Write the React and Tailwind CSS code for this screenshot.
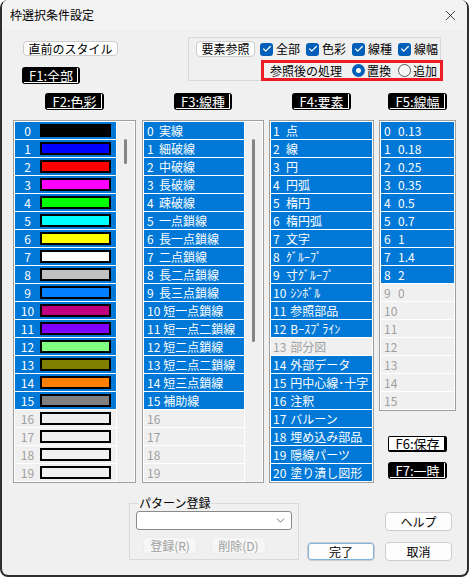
import React from "react";
import { X, Check, ChevronDown } from "lucide-react";

const swatches = [
  "bg-[#000000]", "bg-[#0000ff]", "bg-[#ff0000]", "bg-[#ff00ff]", "bg-[#00ff00]",
  "bg-[#00ffff]", "bg-[#ffff00]", "bg-[#ffffff]", "bg-[#c0c0c0]", "bg-[#0080ff]",
  "bg-[#c00080]", "bg-[#8000ff]", "bg-[#80ff80]", "bg-[#808000]", "bg-[#ff8000]",
  "bg-[#808080]",
];

const lineTypes = [
  "実線", "細破線", "中破線", "長破線", "疎破線", "一点鎖線", "長一点鎖線", "二点鎖線",
  "長二点鎖線", "長三点鎖線", "短一点鎖線", "短一点二鎖線", "短二点鎖線", "短二点二鎖線",
  "短三点鎖線", "補助線",
];

const elements = [
  "点", "線", "円", "円弧", "楕円", "楕円弧", "文字", "ｸﾞﾙｰﾌﾟ", "寸ｸﾞﾙｰﾌﾟ", "ｼﾝﾎﾞﾙ",
  "参照部品", "Bｰｽﾌﾟﾗｲﾝ", "部分図", "外部データ", "円中心線･十字", "注釈", "バルーン",
  "埋め込み部品", "隠線パーツ", "塗り潰し図形",
];

const widths = ["0.13", "0.18", "0.25", "0.35", "0.5", "0.7", "1", "1.4", "2", "0"];

function BlackTag({ children }) {
  return (
    <div className="bg-black rounded-[3px] h-[17px] pl-[2px] pt-[1px] pr-[2px] pb-[1px] flex">
      <div className="border-r border-b border-white text-white text-[13px] leading-none flex items-center pl-[5px] pr-[4px]">
        {children}
      </div>
    </div>
  );
}

function Btn({ children, className = "" }) {
  return (
    <div className={`bg-[#fdfdfd] border border-[#cccccc] rounded-[4px] text-[12px] leading-none flex items-center justify-center ${className}`}>
      {children}
    </div>
  );
}

function Row({ on, children }) {
  return (
    <div className={`h-[18px] border-b border-white flex items-center text-[12px] leading-none whitespace-nowrap ${on ? "bg-[#0078d7] text-white" : "bg-[#f0f0f0] text-[#a0a0a0]"}`}>
      {children}
    </div>
  );
}

function Scroll({ top, height }) {
  return (
    <div className="w-[17px] ml-[1px] bg-[#f0f0f0] flex flex-col items-center">
      <div className={`w-[3px] rounded-full bg-[#858585] ${top} ${height}`} />
    </div>
  );
}

function CheckItem({ label, last }) {
  return (
    <div className={`flex items-center ${last ? "" : "w-[46px]"}`}>
      <span className="w-[13px] h-[13px] rounded-[3px] bg-[#005fb8] flex items-center justify-center">
        <Check size={10} strokeWidth={3} color="white" />
      </span>
      <span className="ml-[3px] text-[12px] leading-none">{label}</span>
    </div>
  );
}

export default function App() {
  return (
    <div className="w-[469px] h-[577px] bg-white font-['Noto_Sans_CJK_JP','Noto_Sans',sans-serif] text-black">
      <div className="w-full h-full flex flex-col bg-[#f0f0f0] border-x-2 border-b-2 border-[#2e2e2e] rounded-[8px] overflow-hidden">
        {/* title bar */}
        <div className="h-[30px] shrink-0 flex items-center justify-between pl-[8px] pr-[8px] bg-[#f3f3f3]">
          <span className="text-[12px]">枠選択条件設定</span>
          <X size={17} strokeWidth={1} />
        </div>

        {/* top controls */}
        <div className="h-[63px] shrink-0 flex">
          <div className="w-[165px] ml-[21px] pt-[11px] flex flex-col items-start">
            <Btn className="w-[95px] h-[15px]">直前のスタイル</Btn>
            <div className="mt-[11px] -ml-[1px]">
              <BlackTag>F1:全部</BlackTag>
            </div>
          </div>
          <div className="mt-[7px] w-[253px] h-[44px] border border-[#d9d9d9] flex flex-col items-end">
            <div className="self-stretch flex items-center pl-[7px] pt-[3px]">
              <Btn className="w-[59px] h-[16px]">要素参照</Btn>
              <div className="ml-[5px] flex items-center">
                <CheckItem label="全部" />
                <CheckItem label="色彩" />
                <CheckItem label="線種" />
                <CheckItem label="線幅" last />
              </div>
            </div>
            <div className="mt-[3px] -mr-[3px] w-[182px] h-[21px] shrink-0 border-[3px] border-[#ed1c24] flex items-center pl-[6px] text-[12px] leading-none">
              <span>参照後の処理</span>
              <span className="ml-[10px] w-[13px] h-[13px] rounded-full bg-[#005fb8] flex items-center justify-center">
                <span className="w-[5px] h-[5px] rounded-full bg-white" />
              </span>
              <span className="ml-[2px]">置換</span>
              <span className="ml-[7px] w-[13px] h-[13px] rounded-full border border-[#5a5a5a] bg-[#f7f7f7]" />
              <span className="ml-[2px]">追加</span>
            </div>
          </div>
        </div>

        {/* lists */}
        <div className="h-[390px] shrink-0 flex pl-[11px]">
          {/* colours */}
          <div className="w-[123px] flex flex-col items-center">
            <BlackTag>F2:色彩</BlackTag>
            <div className="mt-[10px] w-full border border-[#a0a0a0] bg-white pt-px px-px flex">
              <div className="w-[101px] flex flex-col">
                {Array.from({ length: 20 }, (_, i) => (
                  <Row key={i} on={i < 16}>
                    <span className="w-[25px] text-center">{i}</span>
                    <span className={`w-[71px] h-[13px] border-2 border-black ${i < 16 ? swatches[i] : "bg-[#f0f0f0]"}`} />
                  </Row>
                ))}
              </div>
              <Scroll top="mt-[17px]" height="h-[25px]" />
            </div>
          </div>

          {/* line types */}
          <div className="w-[122px] ml-[6px] flex flex-col items-center">
            <BlackTag>F3:線種</BlackTag>
            <div className="mt-[10px] w-full border border-[#a0a0a0] bg-white pt-px px-px flex">
              <div className="w-[100px] flex flex-col overflow-hidden">
                {Array.from({ length: 20 }, (_, i) => (
                  <Row key={i} on={i < 16}>
                    <span className="ml-[3px] min-w-[9px]">{i}</span>
                    <span className="ml-[3px]">{lineTypes[i] || ""}</span>
                  </Row>
                ))}
              </div>
              <Scroll top="mt-[17px]" height="h-[203px]" />
            </div>
          </div>

          {/* elements */}
          <div className="w-[105px] ml-[5px] flex flex-col items-center">
            <BlackTag>F4:要素</BlackTag>
            <div className="mt-[10px] w-full border border-[#a0a0a0] bg-white pt-px px-px overflow-hidden">
              {elements.map((t, i) => (
                <Row key={i} on={i !== 12}>
                  <span className="ml-[2px] min-w-[9px]">{i + 1}</span>
                  <span className="ml-[4px]">{t}</span>
                </Row>
              ))}
            </div>
          </div>

          {/* widths */}
          <div className="w-[77px] ml-[5px] flex flex-col items-center">
            <BlackTag>F5:線幅</BlackTag>
            <div className="mt-[10px] w-full border border-[#a0a0a0] bg-white pt-px px-px">
              {Array.from({ length: 16 }, (_, i) => (
                <Row key={i} on={i < 9}>
                  <span className="pl-[3px] min-w-[17px]">{i}</span>
                  <span>{widths[i] || ""}</span>
                </Row>
              ))}
            </div>
            <div className="mt-[25px] h-[16px] bg-white border border-black border-r-[3px] border-b-[2px] rounded-[2px] flex items-center pl-[6px] pr-[4px] text-[13px] leading-none">
              F6:保存
            </div>
            <div className="mt-[10px]">
              <BlackTag>F7:一時</BlackTag>
            </div>
          </div>
        </div>

        {/* bottom */}
        <div className="flex-1 flex">
          <fieldset className="ml-[127px] mt-[12px] w-[170px] h-[65px] border border-[#d9d9d9] px-[6px]">
            <legend className="ml-[2px] px-[1px] text-[12px] leading-[16px]">パターン登録</legend>
            <div className="h-[19px] bg-white border border-[#8a8a8a] rounded-[3px] flex items-center justify-end pr-[4px]">
              <ChevronDown size={13} strokeWidth={1.5} color="#555" />
            </div>
            <div className="flex mt-[7px] pl-[7px]">
              <div className="w-[54px] h-[17px] rounded-[4px] bg-[#f6f6f6] border border-[#ececec] text-[12px] leading-none text-[#a0a0a0] flex items-center justify-center">
                登録(R)
              </div>
              <div className="ml-[14px] w-[55px] h-[17px] rounded-[4px] bg-[#f6f6f6] border border-[#ececec] text-[12px] leading-none text-[#a0a0a0] flex items-center justify-center">
                削除(D)
              </div>
            </div>
          </fieldset>
          <div className="ml-[8px] pt-[59px]">
            <Btn className="w-[68px] h-[19px] border-[#005fb8] shadow-[inset_0_0_0_1px_#7fb2e0]">完了</Btn>
          </div>
          <div className="ml-[10px] pt-[29px] flex flex-col">
            <Btn className="w-[67px] h-[19px]">ヘルプ</Btn>
            <Btn className="mt-[11px] w-[67px] h-[19px]">取消</Btn>
          </div>
        </div>
      </div>
    </div>
  );
}
